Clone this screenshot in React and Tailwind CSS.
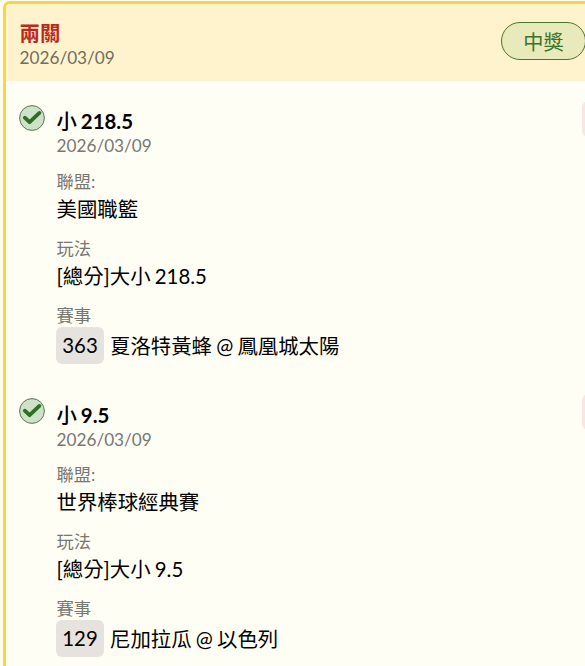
import React from 'react';

const bets = [
  { title: "小 218.5", date: "2026/03/09", league: "美國職籃", play: "[總分]大小 218.5", code: "363", match: "夏洛特黃蜂 @ 鳳凰城太陽" },
  { title: "小 9.5", date: "2026/03/09", league: "世界棒球經典賽", play: "[總分]大小 9.5", code: "129", match: "尼加拉瓜 @ 以色列" },
];

function CheckIcon() {
  return (
    <svg viewBox="0 0 26 26" className="w-[26px] h-[26px] shrink-0">
      <circle cx="13" cy="13" r="12.4" fill="#cde2c8" stroke="#5b7556" strokeWidth="1" />
      <path d="M5.8 12.7 L10.6 17.2 L20.4 7.9" fill="none" stroke="#2d7023" strokeWidth="3.8" strokeLinecap="round" strokeLinejoin="round" />
    </svg>
  );
}

function Field({ label, children }) {
  return (
    <div>
      <div className="h-6 leading-[26px] text-[17.3px] text-[#777772]">{label}</div>
      {children}
    </div>
  );
}

function Bet({ bet }) {
  return (
    <div className="flex items-start gap-[11.5px]">
      <CheckIcon />
      <div className="flex-1 min-w-0 pt-[2.25px] text-[20.4px] whitespace-nowrap [word-spacing:-1px]">
        <div className="h-7 leading-7 font-bold"><span className="font-medium">小</span>{bet.title.slice(1)}</div>
        <div className="h-5 leading-[22px] mb-[13.25px] text-[17.2px] text-[#777772]">{bet.date}</div>
        <div className="flex flex-col gap-[11px]">
          <Field label="聯盟:">
            <div className="h-8 leading-8">{bet.league}</div>
          </Field>
          <Field label="玩法">
            <div className="h-8 leading-8">{bet.play}</div>
          </Field>
          <Field label="賽事">
            <div className="flex items-center gap-1.5 h-[37px] -ml-[0.5px]">
              <span className="w-12 h-[37px] leading-[37px] rounded-md bg-[#e6e2dd] text-center">{bet.code}</span>
              <span className="leading-[37px] pt-0.5">{bet.match}</span>
            </div>
          </Field>
        </div>
      </div>
      {/* Tag continues past the right edge */}
      <div className="w-10 h-9 -mt-1 -mr-10 shrink-0 rounded-md bg-[#f8e6e0]"></div>
    </div>
  );
}

export default function App() {
  return (
    <div className="w-[585px] h-[666px] overflow-hidden bg-[#fffdf0] pt-px pl-[3px] font-['Lato','Noto_Sans_CJK_TC',sans-serif] text-black">
      <div className="w-[620px] h-[700px] rounded-[7px] border-[3px] border-[#f4d743] bg-[#fffef5] overflow-hidden">
        <header className="flex items-start h-[77px] pl-[13.5px] bg-[#fff3cd]">
          <div className="w-[481.5px] pt-[15px]">
            <h1 className="h-7 leading-7 text-[20.4px] font-bold text-[#b9291f]">兩關</h1>
            <p className="h-5 leading-[22px] text-[17.2px] text-[#716d62]">2026/03/09</p>
          </div>
          <div className="mt-[18px] w-[85px] h-[38px] leading-[38px] rounded-full border border-[#47762f] bg-[#e8eabb] text-center text-[20.2px] text-[#3a7429]">中獎</div>
        </header>
        <main className="w-[576px] pl-[13px] pt-6 flex flex-col gap-[34.9px]">
          {bets.map((bet) => <Bet key={bet.code} bet={bet} />)}
        </main>
      </div>
    </div>
  );
}
